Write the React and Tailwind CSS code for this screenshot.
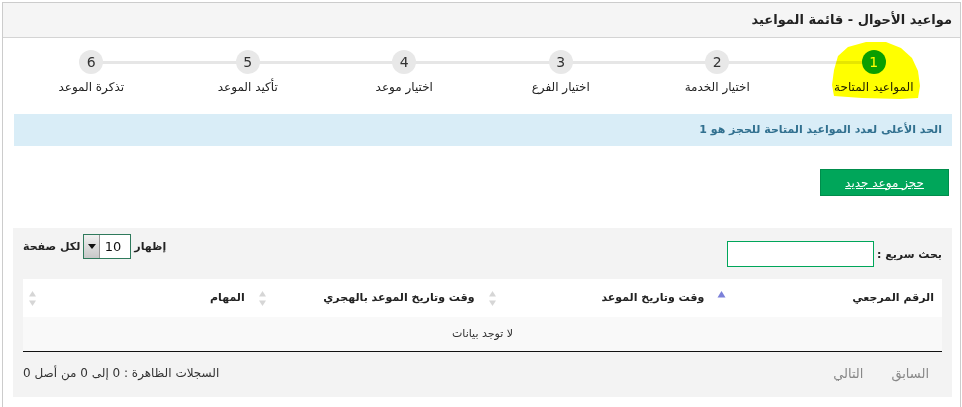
import React from 'react';

const steps = [
    { n: 1, label: 'المواعيد المتاحة', active: true },
    { n: 2, label: 'اختيار الخدمة' },
    { n: 3, label: 'اختيار الفرع' },
    { n: 4, label: 'اختيار موعد' },
    { n: 5, label: 'تأكيد الموعد' },
    { n: 6, label: 'تذكرة الموعد' },
];

const SortBoth = () => (
    <svg width="9" height="17" viewBox="0 0 9 17" className="shrink-0">
        <path d="M4.5 1 L8 6.5 L1 6.5 Z" fill="#d6d6d6" />
        <path d="M4.5 16 L8 10.5 L1 10.5 Z" fill="#d6d6d6" />
    </svg>
);

const SortAsc = () => (
    <svg width="9" height="17" viewBox="0 0 9 17" className="shrink-0">
        <path d="M4.5 1 L8.5 7.5 L0.5 7.5 Z" fill="#7b80d9" />
    </svg>
);

const columns = [
    { label: 'الرقم المرجعي', icon: SortAsc },
    { label: 'وقت وتاريخ الموعد', icon: SortBoth },
    { label: 'وقت وتاريخ الموعد بالهجري', icon: SortBoth },
    { label: 'المهام', icon: SortBoth },
];

export default function App() {
    return (
        <div dir="rtl" className="relative h-[407px] overflow-hidden bg-white text-[#333]" style={{ fontFamily: '"DejaVu Sans", Tahoma, sans-serif' }}>
            <div className="ml-[2px] mr-[1px] mt-[2px] h-[420px] border border-[#cccccc]">
                {/* Header */}
                <div className="h-[35px] bg-[#f5f5f5] border-b border-[#d4d4d4] flex items-center pr-[8px]">
                    <h1 className="text-[13px] font-bold text-[#222]">مواعيد الأحوال - قائمة المواعيد</h1>
                </div>

                <div className="pr-[8px] pl-[10px]">
                    {/* Wizard */}
                    <div className="relative grid grid-cols-6 pt-[12px]">
                        <div className="absolute top-[23px] right-[78px] left-[78px] h-[3px] bg-[#e6e6e6]" />
                        {steps.map(s => (
                            <div key={s.n} className="relative flex flex-col items-center">
                                <div className={`w-[24px] h-[24px] rounded-full flex items-center justify-center text-[14px] ${s.active ? 'bg-[#0a9e0a] text-white' : 'bg-[#e8e8e8] text-[#333]'}`}>
                                    {s.n}
                                </div>
                                <div className="mt-[6px] text-[12px] leading-[14px] text-[#222] whitespace-nowrap">{s.label}</div>
                            </div>
                        ))}
                    </div>

                    {/* Alert */}
                    <div className="mt-[20px] h-[32px] bg-[#d9edf7] flex items-center pr-[10px] ml-[1px]">
                        <span className="text-[11px] font-bold text-[#31708f]">الحد الأعلى لعدد المواعيد المتاحة للحجز هو 1</span>
                    </div>

                    {/* Button */}
                    <div className="mt-[23px] flex pr-[3px]">
                        <a href="#" className="w-[129px] h-[27px] bg-[#00a65a] border border-[#008d4c] flex items-center justify-center text-white text-[12px] underline">حجز موعد جديد</a>
                    </div>

                    {/* Data table panel */}
                    <div className="mt-[32px] h-[169px] bg-[#f3f3f3] px-[10px]">
                        <div className="flex justify-between items-start">
                            <div className="flex items-center mt-[13px]">
                                <span className="text-[11px] font-bold text-[#222] ml-[3px] mt-[2px]">بحث سريع :</span>
                                <div className="w-[147px] h-[26px] bg-white border border-[#00a65a]" />
                            </div>
                            <div className="flex items-center mt-[6px] text-[11px] font-bold text-[#222]">
                                <span className="ml-[3px] mt-[2px]">إظهار</span>
                                <div dir="ltr" className="w-[48px] h-[25px] border border-[#2f7a5c] bg-white flex items-center">
                                    <div className="w-[16px] h-[23px] bg-gradient-to-b from-[#f0f0f0] to-[#c8c8c8] border-r border-[#999] flex items-center justify-center">
                                        <svg width="8" height="5" viewBox="0 0 8 5"><path d="M0 0 H8 L4 5 Z" fill="#111" /></svg>
                                    </div>
                                    <span className="flex-1 text-right pr-[9px] font-normal text-[13px] text-[#111]">10</span>
                                </div>
                                <span className="mr-[3px] mt-[2px]">لكل صفحة</span>
                            </div>
                        </div>

                        <table className="w-full mt-[12px] border-collapse">
                            <thead>
                                <tr className="bg-white h-[38px]">
                                    {columns.map(c => {
                                        const Icon = c.icon;
                                        return (
                                            <th key={c.label} className="w-1/4 p-0 text-right">
                                                <div className="flex items-center justify-between pr-[8px] pl-[5px]">
                                                    <span className="text-[11px] font-bold text-[#222] whitespace-nowrap">{c.label}</span>
                                                    <Icon />
                                                </div>
                                            </th>
                                        );
                                    })}
                                </tr>
                            </thead>
                            <tbody>
                                <tr className="bg-[#f9f9f9] h-[34px] border-b border-[#111]">
                                    <td colSpan={4} className="text-center text-[11px] text-[#333]">لا توجد بيانات</td>
                                </tr>
                            </tbody>
                        </table>

                        <div className="flex justify-between items-center mt-[12px]">
                            <div className="flex items-center gap-[28px] pr-[13px] text-[13px] text-[#888]">
                                <span>السابق</span>
                                <span>التالي</span>
                            </div>
                            <span className="text-[12px] text-[#333]">السجلات الظاهرة : 0 إلى 0 من أصل 0</span>
                        </div>
                    </div>
                </div>
            </div>

            {/* Yellow highlighter mark over step 1 */}
            <svg className="absolute left-0 top-0 pointer-events-none mix-blend-multiply" width="962" height="407">
                <path d="M838 56 L848 47 L866 42 L886 42 L901 48 L912 58 L918 71 L920 86 L918 98 L900 99 L862 98 L834 96 L832 85 L834 70 Z" fill="#ffff00" />
            </svg>
        </div>
    );
}
